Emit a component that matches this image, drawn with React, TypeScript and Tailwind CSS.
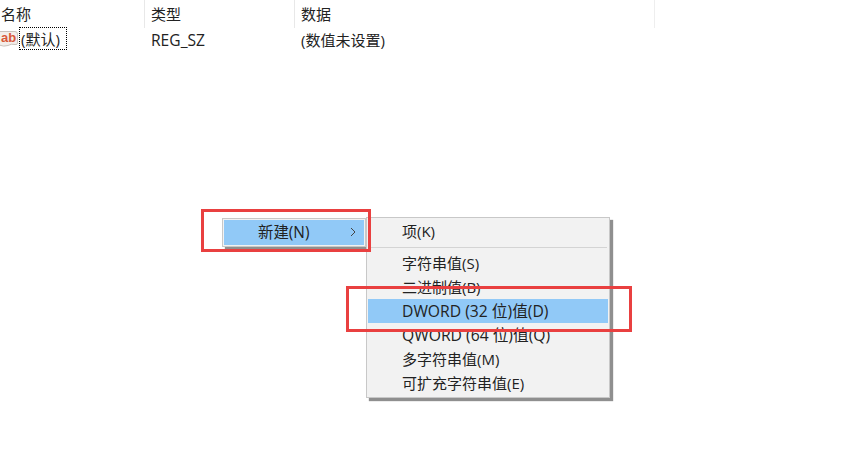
const font = "font-['Open_Sans','Noto_Sans_CJK_SC',sans-serif]";

const items = [
	{ label: "字符串值(S)" },
	{ label: "二进制值(B)" },
	{ label: "DWORD (32 位)值(D)", active: true, wide: true },
	{ label: "QWORD (64 位)值(Q)", wide: true },
	{ label: "多字符串值(M)" },
	{ label: "可扩充字符串值(E)" },
];

const AbIcon = () => (
	<svg width="19" height="21" viewBox="0 0 19 21" className="shrink-0">
		<path d="M-1 3.5 H15 Q17.5 3.5 17.5 6 V15 Q17.5 17 15 16.5 Q11 15.5 8 17.5 Q4 19 -1 17 Z" fill="#f3eeea" stroke="#c9c3bd" strokeWidth="1" />
		<text x="1" y="14" fontSize="13" fontWeight="700" fill="#d8583a" fontFamily="Liberation Sans, sans-serif">ab</text>
	</svg>
);

export default function App() {
	return (
		<div className={`relative w-[856px] h-[454px] overflow-hidden bg-white text-[15px] text-[#222] ${font}`}>
			<div className="flex h-[28px] w-[655px] border-r border-[#eeeeee]">
				<div className="w-[145px] pl-px pt-[3px] border-r border-[#e8e8e8]">名称</div>
				<div className="w-[150px] pl-[6px] pt-[3px] border-r border-[#e8e8e8]">类型</div>
				<div className="flex-1 pl-[6px] pt-[3px]">数据</div>
			</div>
			<div className="-mt-px flex h-[23px] items-center">
				<div className="flex w-[145px] items-center">
					<AbIcon />
					<span className="h-[23px] w-[48px] whitespace-nowrap border border-dotted border-black pl-px leading-[23px]">(默认)</span>
				</div>
				<div className="h-[23px] w-[156px] pl-[6px] text-[15.6px] leading-[27px]">REG_SZ</div>
				<div className="h-[23px] leading-[27px]">(数值未设置)</div>
			</div>

			<div className="absolute left-[222px] top-[218px] h-[29px] w-[144px] border border-[#c8c8c8] bg-[#f2f2f2] p-px shadow-[3px_3px_1px_#8f8f8f]">
				<div className="flex h-[25px] items-center bg-[#91c9f7] pl-[34px]">
					<span className="leading-[25px] text-[15.4px]">新建(N)</span>
					<svg width="8" height="10" viewBox="0 0 8 10" className="ml-[40px] mb-[2px]">
						<path d="M2 1 L6 5 L2 9" fill="none" stroke="#444" strokeWidth="1" />
					</svg>
				</div>
			</div>

			<div className="absolute left-[366px] top-[217px] flex h-[181px] w-[244px] flex-col border border-[#c8c8c8] bg-[#f2f2f2] p-px shadow-[3px_3px_1px_#8f8f8f]">
				<div className="flex h-[24px] shrink-0 items-center pl-[34px] pt-[1px]">项(K)</div>
				<div className="mx-[1px] mt-[4px] mb-[3px] h-px shrink-0 bg-[#d4d4d4]" />
				{items.map((item) => (
					<div key={item.label} className={`flex h-[24px] shrink-0 items-center pl-[34px] pt-[1px] ${item.active ? "bg-[#91c9f7]" : ""} ${item.wide ? "text-[15.7px]" : ""}`}>
						{item.label}
					</div>
				))}
			</div>

			<div className="absolute left-[201px] top-[209px] h-[43px] w-[170px] border-[3px] border-[#e94040]" />
			<div className="absolute left-[346px] top-[286px] h-[46px] w-[286px] border-[3px] border-[#e94040]" />
		</div>
	);
}
